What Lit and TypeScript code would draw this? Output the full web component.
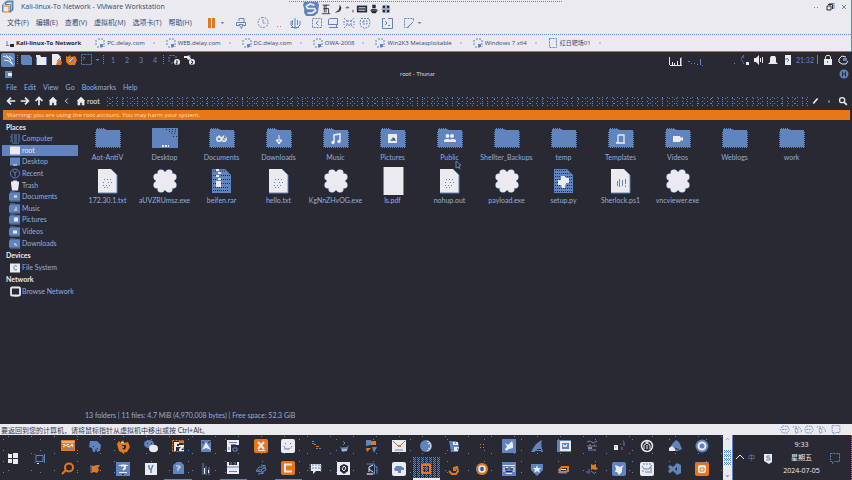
import { LitElement, html, svg, css, TemplateResult } from "lit";
import { customElement, property } from "lit/decorators.js";

const B = "#6084bd";
const W = "#ebebef";
const D = "#292933";
const O = "#e77817";

const folder = (mark: unknown = "") => svg`
  <path d="M2 5V2h9l2 1h13v17H2z" fill="${B}"/>
  <path d="M3 1.5h7M2.5 3.5h23M1.5 5v15M26.5 5v15M3 20.5h23" stroke="${B}" stroke-dasharray="1 1" fill="none"/>${mark}`;
const paper = (mark: unknown = "") => svg`
  <path d="M4 2h13l6 6v18H4z" fill="${W}"/><path d="M17 2l6 6v18H4" fill="none" stroke="${B}"/>${mark}`;
const textLines = svg`<path d="M10 12.5h9M9 15.5h3m2 0h5M9 18.5h8M10 20.5h6" stroke="${B}" stroke-dasharray="1 2" fill="none"/>`;
const lobes = [[4, 8], [8, 4]].flatMap(([x, y]) => [[x, y], [-x, y], [x, -y], [-x, -y]]);
const gear = svg`<g transform="translate(14 14)">
  ${lobes.map(([x, y]) => svg`<circle cx="${x}" cy="${y}" r="3.800" fill="${B}"/>`)}
  ${lobes.map(([x, y]) => svg`<circle cx="${x}" cy="${y}" r="3.300" fill="${W}"/>`)}
  <circle r="9.500" fill="${W}"/></g>`;

/* Large icons of the file view, drawn on a 28 x 28 board. */
const fileIcons: Record<string, TemplateResult> = {
  folder: svg`<g transform="translate(0 3)">${folder()}</g>`,
  desktop: svg`<path d="M1 4h26v20H1z" fill="${B}"/><path d="M15 5.5h10M18 7.5h8M20 9.5h6M22 12.5h4" stroke="${D}" stroke-dasharray="1 2"/><path d="M11 22h2m1 0h2m1 0h1" stroke="${W}" stroke-width="2"/>`,
  documents: svg`<g transform="translate(0 3)">${folder(svg`<g fill="none" stroke="${W}" stroke-width="1.5"><circle cx="11" cy="12" r="2.2"/><circle cx="16" cy="12" r="2.2"/></g><path d="M16 8v4l2-1M11 8v3" stroke="${W}"/>`)}</g>`,
  downloads: svg`<g transform="translate(0 3)">${folder(svg`<path d="M14 8v5m-3 0h6l-3 4z" stroke="${W}" fill="${W}"/><path d="M13 14h2" stroke="${B}"/>`)}</g>`,
  music: svg`<g transform="translate(0 3)">${folder(svg`<path d="M12 15V8l6-1v7" stroke="${W}" stroke-width="1.5" fill="none"/><circle cx="11" cy="15.500" r="1.700" fill="${W}"/><circle cx="17" cy="14.500" r="1.700" fill="${W}"/>`)}</g>`,
  pictures: svg`<g transform="translate(0 3)">${folder(svg`<path d="M9 7h9v9H9z" fill="${W}"/><path d="M11 14l3-4 2 2 1 2z" fill="${B}"/><path d="M14 12h2" stroke="${D}"/>`)}</g>`,
  public: svg`<g transform="translate(0 3)">${folder(svg`<g fill="${W}"><circle cx="11.500" cy="9" r="2"/><circle cx="16" cy="9" r="2"/><path d="M8 15v-2l2-1h3l1 1 1-1h3l2 1v2z"/></g>`)}</g>`,
  templates: svg`<g transform="translate(0 3)">${folder(svg`<path d="M11 8h6v8m-6-8v7h-1m-1 1h9" stroke="${W}" stroke-width="1.300" fill="none"/>`)}</g>`,
  videos: svg`<g transform="translate(0 3)">${folder(svg`<path d="M9 9h7l1 2 2-1v4l-2-1-1 2H9z" fill="${W}"/>`)}</g>`,
  text: paper(textLines),
  script: paper(svg`<path d="M10.500 14v5M12.500 12v8M15.500 13v6M18.500 12v5m0 1.500v1.500" stroke="${B}"/>`),
  exe: gear,
  blank: svg`<path d="M4 0h21v28H4z" fill="${B}"/><path d="M5 0h19v28H5z" fill="${W}"/>`,
  archive: svg`<path d="M4 2h13l6 6v18H4z" fill="${B}"/><path d="M5 4h3m4 0h5M5 8.500h3m5 0h9M5 12.500h3m5 0h9M5 16.500h3m5 0h9M5 20.500h16M5 23.500h16" stroke="${D}" stroke-dasharray="1 1" /><path d="M8 2h3v2H8zm2 3h3v2h-3zM8 8h3v2H8zm2 3h3v2h-3zM8 14h5v6H8z" fill="${W}"/>`,
  python: svg`<path d="M4 2h13l6 6v18H4z" fill="${B}"/><path d="M5 3.500h12M5 6.500h15M5 9.500h17M5 12.500h17M5 15.500h17M5 18.500h17M5 21.500h17M5 24.500h17" stroke="${D}" stroke-dasharray="1 1"/><path d="M11 9h4l1 2h3v5h-3l-1 5h-3l-1-3H8v-5h3z" fill="${W}"/>`,
};

/* Small icons, drawn on a 14 x 14 board. */
const dash = (d: string, color = B) => svg`<path d="${d}" fill="none" stroke="${color}" stroke-dasharray="2 1"/>`;
const line = (d: string, color = B, w = 1) => svg`<path d="${d}" fill="none" stroke="${color}" stroke-width="${w}"/>`;
const fill = (d: string, color = B) => svg`<path d="${d}" fill="${color}"/>`;
const tile = (color: string, mark: unknown) => svg`<rect width="14" height="14" rx="2" fill="${color}"/>${mark}`;
const sideFolder = (mark: unknown = "") => svg`${fill("M2 3h10v8H2z")}${line("M2 2.500h5m0 1h5M1.500 4v7m.5.500h10", B)}${mark}`;

const icons: Record<string, unknown> = {
  vmware: svg`${line("M5.500 4V2.500l2-1h5v8l-2 2H9", B, 2)}${line("M3 6h6v6H3z", O)}${line("M5 4.500h5.500V10", B)}${line("M2.500 12V5l2-2")}`,
  pause: fill("M3 2h3v10H3zm4 0h3v10H7z", O),
  caret: fill("M5 6h4L7 8z"),
  printer: line("M5 5V2.500h5V6M2.500 9V6.500h9v3M2 9.500h3m4 0h3M5 8.500h4l-1.500 4z"),
  clock: dash("M7 2a5 5 0 1 0 .1 0M7 4v3.500h3"),
  dots: svg`${line("M5 10.500h1m2 0h1", O)}`,
  tree: line("M7 2v9M3 5v4l3 3h3l3-3V5M4.500 4v5M9.500 4v5M3 11.500h8"),
  pane1: svg`${dash("M2.500 2.500h9v9h-9z")}${line("M8.500 5L6 7l2.500 2.500")}`,
  pane2: svg`${line("M2.500 9V3.500l1-1h8V9M2 8.500h10M3 11.500h9M10.500 9v3")}`,
  pane3: dash("M2 2l3 3m4 0l3-3M2 12l3-3m4 0l3 3M5 5h4v4H5zM2 5v4M12 5v4"),
  pane4: dash("M3 2.500h8l1 4-1 4-4 2-4-2-1-4zM5 5h4v3H5z"),
  console: svg`${line("M5 2.500H2.500v10h10v-10H8M5 5l2 2-2 2M8 9.500h2")}`,
  fit: svg`${dash("M2.500 2.500h9v3m-5 6h-4v-9")}${line("M6 11l5-5")}`,
  sogou: svg`${fill("M1 1h12l1 3-1 7-4 3H3l-2-3V7L0 4z")}${line("M10 4L6 3 3 5l1 2h6l1 2-3 2H4", W, 1.500)}`,
  wu: line("M3 2.500h8M7 2v9M4 6.500h6V12M2 12.500h10M5 3v8", D),
  moon: svg`${fill("M9 2c4 4 1 10-6 9 4-1 6-4 6-9z", D)}${line("M5 10l4-2")}`,
  punct: svg`${line("M2 5.500h4M10.500 8v3", D)}${fill("M3 4h2v2H3z")}`,
  keyboard: svg`${fill("M1 3h12v8H1z", D)}${line("M3 5.500h8M3 8.500h8", W)}${line("M2 7h10")}`,
  user: svg`${fill("M5 2h4v4H5zM4 7h6l1 2-2 3H5L3 9z", D)}${line("M2 8.500h10")}`,
  grid4: svg`${fill("M3 3h3v3H3zm5 0h3v3H8zM3 8h3v3H3zm5 0h3v3H8z", D)}${line("M2 7h10M7 2v10")}`,
  minimize: line("M5 7.500h1m2 0h1"),
  restore: svg`${line("M5 4.500h4.500V9M4 6h4v4H4z", D)}${line("M6 3.500h5V9")}`,
  x: line("M5 5l4 4M9 5l-4 4"),
  machine: svg`${dash("M5 3h6M3 4v5M11 4v7M4 11h6")}${fill("M7 8h3v3H7z")}`,
  page: dash("M3.500 2.500h7v9h-7z"),
  playing: svg`${line("M5 5v4M4 9.500h3")}${fill("M8 8h4v3H8z", D)}`,
  kali: svg`${tile(B, svg`${line("M2 3l6 2 4 7M5 2l5 5M3 7l5 1 3 3", W)}${line("M8 3l4 3", W)}`)}`,
  screen: svg`${fill("M2 3h10v8H2z")}${line("M2 2.500h9M12.500 4v7M3 11.500h10")}`,
  wfolder: svg`${fill("M2 2h4l1 2h5v8H2V4z", W)}${line("M2.500 4v8m10-8v8")}`,
  note: svg`${fill("M3 1h6l3 3v8H3z", W)}${fill("M8 9l3-3 2 3-1 3H7z", O)}${line("M8 8l4-4")}`,
  firefox: svg`${fill("M2 3l2 1 2-2 1 2 4-1 2 4-2 5H5L2 9z", O)}${fill("M6 5h4v3l-2 1-2-2z")}${line("M5 9l4-4", W)}`,
  terminal: dash("M2.500 1.500h10v10h-10zM4 4l2 1-2 2"),
  copyA: svg`${dash("M2.500 2.500h6M2 4v5m7-6v4M4 10h2")}<circle cx="10" cy="9" r="3" fill="${W}"/>${line("M9 8l1.500 0L9 11h2", D)}`,
  copyB: svg`${line("M2 4.500h3l1-2h2v4h4")}${fill("M2 3h5l2 3-3 1-1-2H2z", W)}<circle cx="10" cy="9" r="3" fill="${W}"/>${line("M9 8h1l1 1-2 2h2", D)}`,
  net: svg`${dash("M8 2L5 6l3 5M6 4h3")}${fill("M10 9h3v3h-3z", W)}`,
  volume: svg`${fill("M3 5h2l3-3v10L5 9H3z", W)}${line("M9.500 5v4M11.500 4v6", W)}`,
  bell: fill("M5 3h4l1 2v4l2 2H2l2-2V5z", W),
  battery: svg`${fill("M4 2h6v10H4z", W)}${line("M6 5l2 2-2 2M4 6h3")}`,
  lock: svg`${fill("M3 6h8v6H3z", W)}${line("M4.500 7V4l1-1.500h3l1 1.500v3", W)}${line("M6.500 8v2")}`,
  power: svg`${line("M10 4L6 3 3 6v3l3 2h4l2-3", W)}${fill("M7 5h4v3H7z", B)}`,
  thunar: svg`${fill("M3 4h7v7H3z")}${fill("M6 6h4v3H6z", W)}`,
  close: svg`<circle cx="7" cy="7" r="4.500" fill="${B}"/>${line("M5.500 4.500v5M8.500 4.500v5M5 7h4", D)}`,
  left: svg`${line("M7 3L3 7l4 4M3 7h9", W, 2)}`,
  right: svg`${line("M7 3l4 4-4 4M2 7h9", W, 2)}`,
  up: svg`${line("M3 7l4-4 4 4M7 3v9", W, 2)}`,
  home: fill("M7 2l5 5h-1v5H8V9H6v3H3V7H2z", W),
  chevron: svg`${line("M8 4L5 7l3 3", W)}`,
  pencil: line("M5 10l5-6", W, 2),
  spot: fill("M6 6h2v3H6z"),
  search: svg`<circle cx="6" cy="6" r="3" fill="none" stroke="${W}" stroke-width="1.500"/>${line("M8.500 8.500l3 3", W, 2)}`,
  computer: svg`${line("M3 3.500h9M2 5.500h10M3 7.500h9M2 9.500h10M4 11.500h7", B)}${line("M5.500 3v8M9.500 3v8", D)}`,
  root: fill("M2 3h10v8H2z", W),
  desk: svg`${fill("M2 3h10v8H2z")}${line("M5 10.500h4", W)}`,
  recent: svg`<circle cx="7" cy="7" r="4.500" fill="none" stroke="${B}"/>${line("M5 4l2 3v3M9 4L7 7", B)}`,
  trash: fill("M3 3h2V2h4v1h2v2l-1 7H4L3 5z", W),
  fDoc: sideFolder(fill("M6 6h3v2H6z", W)),
  fMusic: sideFolder(line("M6 8.500h1m1-3v4", W)),
  fPic: sideFolder(fill("M6 5h4v4H6z", W)),
  fVid: sideFolder(fill("M5 6h4v3H5z", W)),
  fDown: sideFolder(line("M6 7.500h2v2", W)),
  disk: svg`${fill("M2 3h10v9H2z", W)}${line("M9 6L7 5 5.500 7 7 9.500l2-.5")}`,
  network: svg`<rect x="3" y="3" width="9" height="8" rx="1" fill="none" stroke="${W}" stroke-width="1.800"/>${line("M6 12.500h4", W)}`,
  windows: svg`${fill("M2 3h4v4H2zm5-1h5v5H7zM2 8h4v4H2zm5 0h5v5H7z", W)}`,
  taskview: svg`${line("M3 4.500h7v6H3zM2 3v1m0 8v-1M11.500 3v9", B)}${line("M4 12.500h2", W)}`,
  statA: dash("M4 3h6l2 4-2 4H4L2 7zM4 7h6"),
  statB: dash("M2 4h7l3 3v4M5 6h3v5H5z"),
  chevUp: line("M3 8l4-4 4 4", W),
  chevUpB: line("M4 8l3-3 3 3"),
  chevDownB: svg`${line("M4 6l3 3 3-3")}${fill("M6 7h2v2H6z")}`,
  sTray: svg`${fill("M3 3h8v8l-3 2-5-3z", W)}${line("M9 5H6v2h3v2H5")}`,
  notice: dash("M2.500 2.500h9v8h-5l-2 2v-2h-2z"),

  tCase: svg`${fill("M0 1h14v11H0z", O)}${line("M1 3h12M2 5.500h2m2 0h2m2 0h2", W)}${line("M2 8l3-2 3 2 3-2 1 2", W)}${line("M3 11l2-2 3 1 3-1 1 2")}`,
  tElephant: svg`${fill("M2 2h7l4 4-1 6-3 1-1-4-1 4H5L4 9 1 8z")}${line("M9 9.500h1m-5-2h1", D)}`,
  tFire: svg`${fill("M1 5l2-3 2 2 2-3 1 3 4-1 2 5-3 5-4 1-4-2z", O)}${fill("M6 6h4v3l-2 2-2-2z", D)}${line("M5 3l3 1M6 8h2", W)}`,
  tBubbles: svg`<ellipse cx="5" cy="5" rx="5" ry="4" fill="${B}"/><ellipse cx="9.500" cy="9.500" rx="4.500" ry="3.700" fill="${W}"/>${line("M3 4.500h1m3 0h1", D)}`,
  tFz: svg`<path d="M1.500 1.500h11v11h-11z" fill="none" stroke="${O}" stroke-dasharray="2 1"/>${fill("M3 3h5v2H6v2h2v1H5v4H3zM8 6h5v2l-3 3h3v1H8v-2l2-2H8z", W)}${line("M8 3h5", O, 2)}`,
  tA: svg`${fill("M2 1h10v12H2z")}${fill("M7 3l5 8-5-2-4 2z", W)}${line("M3 3l2 1m4 0l3-2", D)}`,
  tP: svg`${fill("M1 1h12v5H5v7H1z", W)}${line("M3 3.500h8M5 5.500h5M3 8v3M7 9h4v3H7z")}`,
  tX: tile(O, svg`${line("M4 3l6 7M10 3l-6 7", W, 2)}${line("M4 11.500h7", W)}`),
  tSmile: tile(W, svg`${dash("M4 4l1 1m4-1l1 1M3 7c1 4 6 4 8 0M3 10h6")}`),
  tCurve: svg`${line("M3 2.500h2m0 3h2m0 2h3", O)}${line("M3 4.500h2m2 5h2m1 0h2")}`,
  tShip: svg`${fill("M3 7l2 2 5-1 2-2-2 6-5 1z")}${line("M6 2l2 2-2 2M5 9h6", B)}${line("M5 11h5", W)}`,
  tPin: svg`${fill("M2 1h5v5l-5 1zM8 8h5l-3 6z")}${fill("M7 2h5v4H7zM2 9h5l-4 4z", O)}`,
  tMail: svg`${fill("M0 1h14v12H0z", W)}${line("M1 2l6 6 6-6M3 11h8")}${line("M6 7h3", O, 2)}`,
  tMoon: svg`<circle cx="7" cy="7" r="6" fill="${B}"/>${line("M8 2c5 1 5 9 0 10M9 5l2-1M9 9l2 1", W)}`,
  tPanda: svg`${fill("M2 2h7l3 3-1 8H4z")}${fill("M6 3h5v3H6zm1 5h5l-1 4H7z", W)}${line("M8 4h1m1 6h1", D)}`,
  tSpark: svg`${line("M5 5.500h1m2 0h1m-4 3h1m2 0h1", O)}`,
  tEagle: svg`${fill("M0 0h14v14H0z")}${fill("M3 4l3 2 4-4 1 3v4l-4 1-3 2-1-2 2-2z", W)}`,
  tFin: svg`${fill("M1 13c2-3 4-9 11-12-1 3-1 7 1 12z")}${line("M5 12.500h6M7 10.500h4", D)}`,
  tW: svg`${fill("M0 1h14v12H0z")}<rect x="4" y="3" width="9" height="8" fill="none" stroke="${W}" stroke-width="2"/>${line("M6 5l1 3 1-2 1 2 1-3", W)}`,
  tTool: svg`${line("M2 3l3-1 3 2 4-2M2 7h10M3 11h8")}${line("M4 6h2m3 0h1", O)}${line("M3 9h4", W)}`,
  tSmall: svg`${fill("M2 6h4v5H2z", W)}${line("M3 8h1M8 5h1m2-3h1m-2 6v3m2-8v4")}`,
  tGlobe: svg`<circle cx="7" cy="7" r="5.500" fill="${D}" stroke="${W}" stroke-width="1.500"/>${line("M5 3h4M7 2v3M4 10V6l3-2 3 2v4M7 6v4", W)}`,
  tHelm: svg`${fill("M1 12L4 5l4-4 3 2 3 7-4 2z")}${fill("M1 9l3-2 3 3v2H1z", W)}${line("M7 9l4 2", D)}`,
  tGear: svg`<circle cx="7" cy="7" r="6.500" fill="${B}"/><circle cx="7" cy="7" r="3.500" fill="${B}" stroke="${W}" stroke-width="2"/>`,

  uSearch: svg`<circle cx="8" cy="5.500" r="4" fill="none" stroke="${O}" stroke-width="2"/>${line("M5 8l-4 4", O, 2)}`,
  uBurp: svg`${fill("M3 4l2 0 4-1 3 0-2 3 1 2-2 3-3-1-3 1 1-4z", O)}${line("M3 3v8m6-7v3")}`,
  uDb: svg`${fill("M0 0h14v14H0z")}${line("M3 3.500h2m5 0h2M3 10.500h8", W)}${line("M5 3.500h4V6L7 8", W, 2)}${line("M6 12.500h2", D)}`,
  uY: svg`${fill("M1 1h12v12H1z", W)}${line("M5 3v3l2 2v3M9 3L7 8", B, 1.500)}`,
  uPage: svg`${fill("M2 4l4-3h4l3 3v9H2z")}${line("M5 5h4v2H7v3", W)}`,
  uBars: svg`${line("M4 1v12M7 4v9M10 5v8")}${line("M5.500 6v6M9.500 8v3", W)}`,
  uSave: svg`${fill("M1 1h12v12H1z", W)}${fill("M3 1h8v3H3z", D)}${line("M3 10.500h8M5 1v3M9 1v3M1 6h12")}`,
  uFish: svg`${line("M2 9l3-4h6l1 3-4 2zM7 3l5 1M3 9l8-3M4 12l6-1")}`,
  uC: tile(O, svg`${line("M11 3.500H4v7h7", W, 2)}`),
  uChat: svg`${fill("M2 2h10v7H7l-3 3V9H2z", W)}${dash("M3 3h8M3 6h8M1 2v7M12 3v7")}`,
  uSix: svg`${fill("M0 0h13v13H0z", W)}<path d="M7 2l4 2v5l-4 3-4-3V4z" fill="${D}"/>${line("M7 4l2 2-2 3-2-2z", W)}`,
  uPc: svg`${line("M2.500 2h8v10h-8M11 4l2 1v7")}${line("M5 10V5l4-2M5 7l4 3M3 12h6", W)}`,
  uCloud: tile(W, fill("M2 7l2-3h5l3 2v2H9v3H6V9H3z")),
  uBox: svg`${line("M4 5V2.500h7V8")}<rect x="3" y="4" width="8" height="8" fill="none" stroke="${O}" stroke-width="2"/>${line("M5 7h3v2")}`,
  uSnail: svg`${line("M2 9l3 3h4l2-3-1-4-3 1v2h2", O, 2)}${line("M9 7h2")}`,
  uChrome: svg`<circle cx="7" cy="7" r="6" fill="${O}"/>${fill("M1 5h4v5H2z", B)}<circle cx="7" cy="7" r="3" fill="${B}" stroke="${W}" stroke-width="1.500"/>${line("M7 5v4", D)}`,
  uWin: svg`${fill("M0 0h14v14H0z")}${line("M1 3.500h12M2 5v5m10-5v5M4 5.500h2m3 0h2M4 11.500h6", W)}${line("M3 7h3m2 0h3M4 9.500h6", D)}`,
  uShield: svg`${fill("M1 2h12v6l-6 6-6-6z")}${fill("M7 3l1 3h3L9 8l1 3-3-2-3 2 1-3-2-2h3z", W)}`,
  uCar: svg`${line("M2 8l3-3h6v4l-3 1H3z", O, 2)}${line("M4 7.500h5", W)}${line("M2 11h8")}`,
  uFlower: svg`${fill("M6 2l2 1 3-1v3l2 2-3 1-2-1-2 1z", O)}${line("M1 10h2m1-3v5m2-3l4 3")}`,
  uBird: tile(B, fill("M3 3l3 1 2 1 4-2-2 3v4l-3 3-2-3H3l1-3z", W)),
  uCat: tile(W, svg`${line("M2 4l2 3h5l3-4M5 10h5M11 5v6")}${dash("M3 2h8M2 9h3")}`),
  uVs: svg`${fill("M9 1l4 2v8l-4 2-4-4-3 2-2-2 2-2-2-2 2-2 3 2z")}${fill("M9 5v4L7 7z", D)}`,
  uPs: tile(O, svg`<rect x="3" y="3" width="8" height="8" rx="2" fill="${W}"/>${line("M5 6h4v3H5z", O)}${dash("M0 1h14")}`),
};

@customElement("ui-icon")
export class UiIcon extends LitElement {
  @property() name = "";
  static styles = css`
    :host { display: block; flex: none; width: 14px; height: 14px; }
    svg { display: block; width: 100%; height: 100%; }
  `;
  render() {
    return html`<svg viewBox="0 0 14 14" preserveAspectRatio="xMidYMid slice" aria-hidden="true">${icons[this.name]}</svg>`;
  }
}

@customElement("file-item")
export class FileItem extends LitElement {
  @property() icon = "";
  @property() label = "";
  static styles = css`
    :host { display: block; }
    button { all: unset; display: flex; flex-direction: column; align-items: center; width: 100%; }
    svg { display: block; width: 28px; height: 28px; }
    span { font: 7px/11px Lato, "Open Sans", sans-serif; color: #93aedb; white-space: nowrap; }
  `;
  render() {
    return html`<button><svg viewBox="0 0 28 28" aria-hidden="true">${fileIcons[this.icon]}</svg><span>${this.label}</span></button>`;
  }
}

const menus = ["文件(F)", "编辑(E)", "查看(V)", "虚拟机(M)", "选项卡(T)", "帮助(H)"];
const toolGroups = [
  ["pause", "caret"], ["printer"], ["clock", "dots", "tree"],
  ["pane1", "pane2", "pane3", "pane4"], ["console"], ["fit", "caret"],
];
const tabs = [
  ["playing", "Kali-linux-To Network"], ["machine", "PC.delay.com"], ["machine", "WEB.delay.com"],
  ["machine", "DC.delay.com"], ["machine", "OWA-2008"], ["machine", "Win2K3 Metasploitable"],
  ["machine", "Windows 7 x64"], ["page", "红日靶场01"],
];
const places = [
  ["computer", "Computer"], ["root", "root"], ["desk", "Desktop"], ["recent", "Recent"], ["trash", "Trash"],
  ["fDoc", "Documents"], ["fMusic", "Music"], ["fPic", "Pictures"], ["fVid", "Videos"], ["fDown", "Downloads"],
];
const files = [
  ["folder", "Aot-AntiV"], ["desktop", "Desktop"], ["documents", "Documents"], ["downloads", "Downloads"],
  ["music", "Music"], ["pictures", "Pictures"], ["public", "Public"], ["folder", "Shellter_Backups"],
  ["folder", "temp"], ["templates", "Templates"], ["videos", "Videos"], ["folder", "Weblogs"], ["folder", "work"],
  ["text", "172.30.1.txt"], ["exe", "aUVZRUmsz.exe"], ["archive", "beifen.rar"], ["text", "hello.txt"],
  ["exe", "KgNnZHvOG.exe"], ["blank", "ls.pdf"], ["text", "nohup.out"], ["exe", "payload.exe"],
  ["python", "setup.py"], ["script", "Sherlock.ps1"], ["exe", "vncviewer.exe"],
];
const apps = [
  "tCase", "tElephant", "tFire", "tBubbles", "tFz", "tA", "tP", "tX", "tSmile", "tCurve", "tShip", "tPin",
  "tMail", "tMoon", "tPanda", "tSpark", "tEagle", "tFin", "tW", "tTool", "tSmall", "tGlobe", "tHelm", "tGear",
  "uSearch", "uBurp", "uDb", "uY", "uPage", "uBars", "uSave", "uFish", "uC", "uChat", "uSix", "uPc",
  "uCloud", "uBox", "uSnail", "uChrome", "uWin", "uShield", "uCar", "uFlower", "uBird", "uCat", "uVs", "uPs",
];
const ic = (n: string) => html`<ui-icon class=${n} name=${n}></ui-icon>`;
const place = ([i, label]: string[]) => html`<a class="place ${i === "root" ? "current" : ""}" href="#${label}">${ic(i)}${label}</a>`;

@customElement("app-root")
export class AppRoot extends LitElement {
  static styles = css`
    :host {
      display: flex; flex-direction: column; min-height: 100vh; box-sizing: border-box;
      --b: #6084bd; --w: #ebebef; --d: #292933; --o: #e77817;
      --dot: conic-gradient(from 270deg at 1px 1px, var(--b) 90deg, transparent 0);
      background: var(--d); color: #93aedb; overflow: hidden;
      font: 7px/10px Lato, "Noto Sans CJK SC", sans-serif;
    }
    button { all: unset; white-space: nowrap; }
    a { color: inherit; text-decoration: none; }
    .row { display: flex; align-items: center; }
    .grow { flex: 1; }
    .caret { width: 7px; }
    .host {
      background: var(--w); color: #34466e; border-bottom: 1px solid var(--b); border-right: 1px solid var(--b);
      font-family: "Open Sans", "Noto Sans CJK SC", sans-serif;
    }
    .title { height: 14px; position: relative; }
    .title > ui-icon { margin-right: 7px; }
    .title .controls { margin-left: auto; }
    .float { position: absolute; left: 34%; right: 34%; top: 0; height: 16px; padding-left: 13px; box-sizing: border-box; background: var(--dot) 0 1px / 2px 20px; }
    .float ui-icon { width: 12px; height: 12px; margin-top: 2px; }
    .float ui-icon:first-child { width: 16px; height: 15px; margin: 0 1px; }
    .menubar { height: 18px; padding: 0 0 2px 7px; }
    .menubar nav { display: flex; gap: 7px; margin-right: 13px; }
    .tools { display: flex; gap: 8px; }
    .group { display: flex; gap: 2px; }
    .group .caret { margin-left: -2px; }
    .rule { height: 1px; background: var(--dot) 0 0 / 2px 1px; }
    .tabs { height: 16px; font-size: 6px; }
    .tab { display: flex; align-items: center; padding-left: 2px; }
    .tab ui-icon:last-child { width: 6px; height: 6px; margin: 0 5px 0 6px; }
    .tab.active { font-weight: 700; color: #1f2540; }
    .tab.active ui-icon:last-child { visibility: hidden; margin: 0 4px 0 0; }
    .panel { height: 15px; padding: 0 1px; }
    .panel ui-icon { margin-right: 1px; }
    .sep { width: 1px; height: 10px; margin: 0 1px; background: var(--dot) 0 0 / 1px 2px; }
    .spaces { display: flex; padding-left: 1px; }
    .spaces button { width: 14px; text-align: center; color: var(--b); }
    .graph { width: 67px; height: 9px; margin-top: 4px; }
    .solid { width: 1px; height: 9px; background: var(--b); margin: 0 3px; }
    .time { color: var(--b); }
    .wtitle { height: 14px; display: grid; grid-template-columns: 1fr auto 1fr; align-items: center; color: #d0d8e8; padding: 0 1px 0 2px; font-size: 6px; }
    .wtitle span { padding-right: 18px; }
    .wtitle ui-icon:last-child { justify-self: end; }
    .wmenu { height: 12px; padding-left: 6px; gap: 7px; }
    .path { height: 16px; padding: 0 3px 0 5px; color: var(--w); }
    .path > button { display: flex; align-items: center; }
    .path ui-icon { width: 12px; height: 12px; margin-right: 2px; }
    .path .search { margin-right: 0; }
    .path .home:has(+ .label) { margin-right: 0; }
    .bar {
      flex: 1; height: 9px; margin-left: 7px;
      background: var(--dot) 0 0 / 5px 4px, var(--dot) 2px 1px / 7px 5px, var(--dot) 3px 2px / 12px 4px;
    }
    .banner { height: 10px; margin: 1px 2px 1px 3px; padding-left: 4px; background: var(--o); color: #f6dfcd; font: 6px/10px "Open Sans", sans-serif; }
    .body { flex: 1; display: grid; grid-template-columns: 79px 1fr; }
    aside h2 { margin: 0; padding-left: 6px; font: 700 7px/12px Lato, sans-serif; color: var(--w); }
    .places { display: grid; grid-template-rows: repeat(10, 1fr); height: 116px; }
    .place { display: flex; align-items: center; padding-left: 6px; margin: 0 1px 0 2px; min-height: 0; line-height: 11px; white-space: nowrap; }
    .place ui-icon { height: 11px; }
    .current { background: var(--b); color: var(--w); }
    aside > .place { height: 12px; }
    .main { display: flex; flex-direction: column; position: relative; }
    .files { display: grid; grid-template-columns: repeat(auto-fill, 57px); row-gap: 4px; padding-top: 3px; }
    .cursor { position: absolute; left: 376px; top: 39px; width: 8px; height: 10px; }
    .summary { margin-top: auto; padding: 0 0 4px 6px; }
    .hint { height: 11px; background: var(--w); color: #2c3858; padding: 0 10px 0 1px; }
    .hint ui-icon { width: 12px; height: 11px; }
    .hint .notice { margin-left: 3px; }
    .taskbar {
      height: 45px; display: flex; font-family: "Open Sans", "Noto Sans CJK SC", sans-serif;
      background: var(--dot) 3px 4px / 37px 11px, var(--dot) 8px 1px / 23px 17px;
    }
    .start { width: 54px; display: flex; align-items: center; gap: 13px; padding-left: 6px; box-sizing: border-box; }
    .apps { flex: 1; display: grid; grid-template-columns: repeat(24, 1fr); grid-template-rows: 22px 23px; }
    .apps button { display: grid; place-items: center; }
    .apps .on { background: var(--dot) 0 0 / 2px 2px, var(--dot) 1px 1px / 4px 2px; border-bottom: 2px solid var(--w); box-sizing: border-box; }
    .apps .open { border-bottom: 1px solid var(--b); box-sizing: border-box; }
    .scroll { width: 9px; margin-left: 7px; background: var(--w); border-right: 1px solid var(--b); display: flex; flex-direction: column; align-items: center; justify-content: space-between; }
    .scroll ui-icon { width: 9px; height: 9px; }
    .scroll i { width: 7px; height: 15px; background: var(--dot) 0 0 / 2px 2px, var(--dot) 1px 1px / 2px 4px; }
    .tray { width: 119px; display: flex; align-items: center; box-sizing: border-box; background: var(--d); color: var(--w); border-right: 1px dotted var(--b); }
    .tray .zh { color: var(--b); margin: 0 6px 0 1px; }
    .tray .notice { margin-right: 9px; }
    .clock { flex: 1; display: grid; grid-template-rows: repeat(3, 13px); line-height: 13px; text-align: center; }
  `;

  render() {
    return html`
      <header class="host">
        <div class="title row">
          ${ic("vmware")}<span>Kali-linux-To Network - VMware Workstation</span>
          <div class="float row">${["sogou", "wu", "moon", "punct", "keyboard", "user", "grid4"].map(ic)}</div>
          <div class="controls row">${["minimize", "restore", "x"].map(ic)}</div>
        </div>
        <div class="menubar row">
          <nav>${menus.map((m) => html`<button>${m}</button>`)}</nav>
          <div class="tools">${toolGroups.map((g) => html`<div class="group">${g.map(ic)}</div>`)}</div>
        </div>
        <div class="rule"></div>
        <nav class="tabs row">
          ${tabs.map(([i, t], n) => html`<button class="tab ${n ? "" : "active"}">${ic(i)}${t}${ic("x")}</button>`)}
        </nav>
      </header>

      <div class="panel row">
        ${ic("kali")}<span class="sep"></span>${["screen", "wfolder", "note", "firefox", "terminal"].map(ic)}${ic("caret")}
        <span class="sep"></span>
        <div class="spaces">${[1, 2, 3, 4].map((n) => html`<button>${n}</button>`)}</div>
        <span class="sep"></span>&nbsp;${ic("copyA")}${ic("copyB")}
        <span class="grow"></span>
        <svg class="graph" viewBox="0 0 67 9" aria-hidden="true">
          <path d="M.5 0v8M1 8.500h12M3.500 5v3M5.500 6v2M8.500 4v4M11.500 1v7" stroke="#ebebef" fill="none"/>
          <path d="M12.500 0v8M19 4.500h2m1 2h1m2 0h1m2 1h1M31.500 2v6M33 8.500h1m31-2h1" stroke="#6084bd" fill="none"/>
        </svg>
        ${["net", "volume", "bell", "battery"].map(ic)}<span class="time">21:32</span><span class="solid"></span>${["lock", "power"].map(ic)}
      </div>
      <div class="wtitle">${ic("thunar")}<span>root - Thunar</span>${ic("close")}</div>
      <nav class="wmenu row">${["File", "Edit", "View", "Go", "Bookmarks", "Help"].map((m) => html`<button>${m}</button>`)}</nav>
      <div class="path row">
        ${["left", "right", "up", "home", "chevron"].map((n) => html`<button>${ic(n)}</button>`)}
        <button>${ic("home")}<span class="label">root</span></button><div class="bar"></div>
        ${["pencil", "spot", "search"].map((n) => html`<button>${ic(n)}</button>`)}
      </div>
      <div class="banner">Warning: you are using the root account. You may harm your system.</div>

      <div class="body">
        <aside>
          <h2>Places</h2><div class="places">${places.map(place)}</div>
          <h2>Devices</h2>${place(["disk", "File System"])}
          <h2>Network</h2>${place(["network", "Browse Network"])}
        </aside>
        <main class="main">
          <div class="files">${files.map(([i, l]) => html`<file-item icon=${i} label=${l}></file-item>`)}</div>
          <svg class="cursor" viewBox="0 0 8 10" aria-hidden="true"><path d="M1 1l5 4-2 1 1 3-2-2-2 1z" fill="#292933" stroke="#6084bd"/></svg>
          <div class="summary">13 folders | 11 files: 4.7 MiB (4,970,008 bytes) | Free space: 52.3 GiB</div>
        </main>
      </div>

      <div class="hint row"><span>要返回到您的计算机，请将鼠标指针从虚拟机中移出或按 Ctrl+Alt。</span><span class="grow"></span>
        ${["statA", "statB", "statA", "statB", "notice"].map(ic)}</div>
      <footer class="taskbar">
        <div class="start">${ic("windows")}${ic("taskview")}</div>
        <div class="apps">${apps.map((a) => html`<button class=${a === "uBox" ? "on" : ["uPage", "uSave", "uC"].includes(a) ? "open" : ""}>${ic(a)}</button>`)}</div>
        <div class="scroll">${ic("chevUpB")}<i></i>${ic("chevDownB")}</div>
        <div class="tray">${ic("chevUp")}<span class="zh">中</span>${ic("sTray")}
          <div class="clock"><span>9:33</span><span>星期五</span><span>2024-07-05</span></div>${ic("notice")}</div>
      </footer>
    `;
  }
}
